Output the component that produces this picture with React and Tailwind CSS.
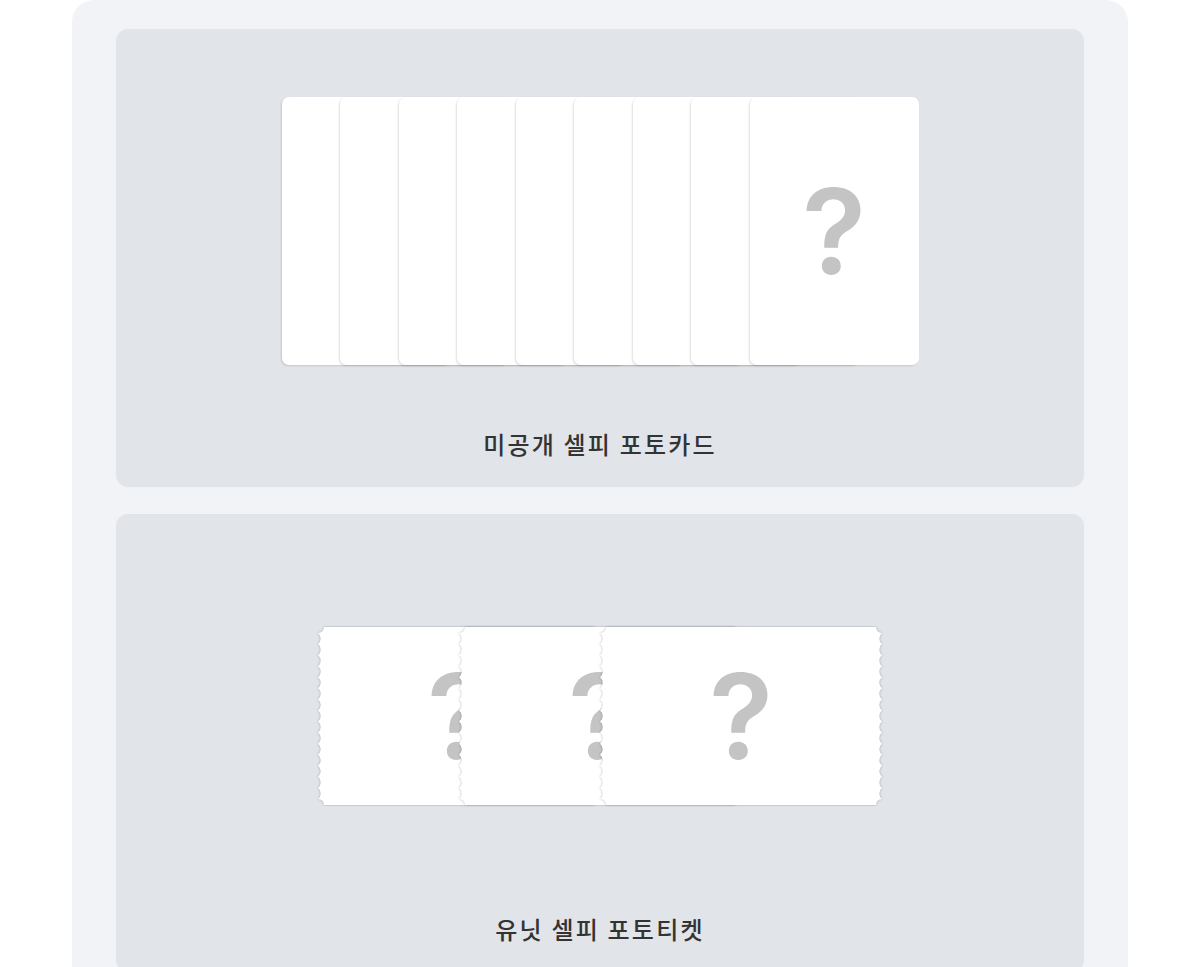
import React from "react";

const W = 282;
const H = 178;

// ticket outline: notched corners + scalloped left/right edges
function ticketPath() {
    const c = 6;
    const n = 15;
    const step = (H - c * 2) / n;
    const r = 7;
    let d = `M ${c} 0 L ${W - c} 0 A ${c} ${c} 0 0 0 ${W} ${c}`;
    for (let i = 0; i < n; i++) {
        d += ` A ${r} ${r} 0 0 0 ${W} ${c + step * (i + 1)}`;
    }
    d += ` A ${c} ${c} 0 0 0 ${W - c} ${H} L ${c} ${H} A ${c} ${c} 0 0 0 0 ${H - c}`;
    for (let i = 0; i < n; i++) {
        d += ` A ${r} ${r} 0 0 0 0 ${H - c - step * (i + 1)}`;
    }
    d += ` A ${c} ${c} 0 0 0 ${c} 0 Z`;
    return d;
}

const PATH = ticketPath();

function Question() {
    return (
        <span
            className="text-[118px] font-semibold leading-none text-[#c4c4c4]"
            style={{ fontFamily: 'Inter, "Noto Sans", sans-serif' }}
        >
            ?
        </span>
    );
}

function Photocards() {
    const cards = Array.from({ length: 9 });
    return (
        <div className="flex">
            {cards.map((_, i) => (
                <div
                    key={i}
                    className={`flex h-[268px] w-[169px] shrink-0 items-center justify-center rounded-[7px] bg-white shadow-[-1px_1px_2px_rgba(0,0,0,0.13)] ${i > 0 ? "-ml-[110.5px]" : ""}`}
                >
                    {i === cards.length - 1 && <Question />}
                </div>
            ))}
        </div>
    );
}

function Tickets() {
    return (
        <div className="flex">
            {[0, 1, 2].map((i) => (
                <div
                    key={i}
                    className={`grid h-[178px] w-[282px] shrink-0 ${i > 0 ? "-ml-[141px]" : ""}`}
                >
                    <svg
                        width={W}
                        height={H}
                        viewBox={`0 0 ${W} ${H}`}
                        className="col-start-1 row-start-1 h-[178px] w-[282px] overflow-visible drop-shadow-[0_0_1px_rgba(0,0,0,0.28)]"
                    >
                        <path d={PATH} fill="#ffffff" />
                    </svg>
                    <div className="relative col-start-1 row-start-1 flex items-center justify-center">
                        <Question />
                    </div>
                </div>
            ))}
        </div>
    );
}

function Section({ title, children }) {
    return (
        <div className="flex h-[458px] flex-col items-center rounded-[12px] bg-[#e1e4e8] pt-[68px]">
            <div className="flex h-[268px] items-center justify-center">{children}</div>
            <p className="mt-[63px] text-[24px] font-medium leading-[32px] tracking-[2.2px] text-[#333333]">{title}</p>
        </div>
    );
}

export default function App() {
    return (
        <div
            className="min-h-screen bg-white"
            style={{ fontFamily: '"Noto Sans CJK KR", "Noto Sans", sans-serif' }}
        >
            <div className="mx-auto w-[1056px] rounded-[22px] bg-[#f2f3f6] px-[44px] pt-[29px] pb-[40px]">
                <div className="flex flex-col gap-[27px]">
                    <Section title="미공개 셀피 포토카드">
                        <Photocards />
                    </Section>
                    <Section title="유닛 셀피 포토티켓">
                        <Tickets />
                    </Section>
                </div>
            </div>
        </div>
    );
}
